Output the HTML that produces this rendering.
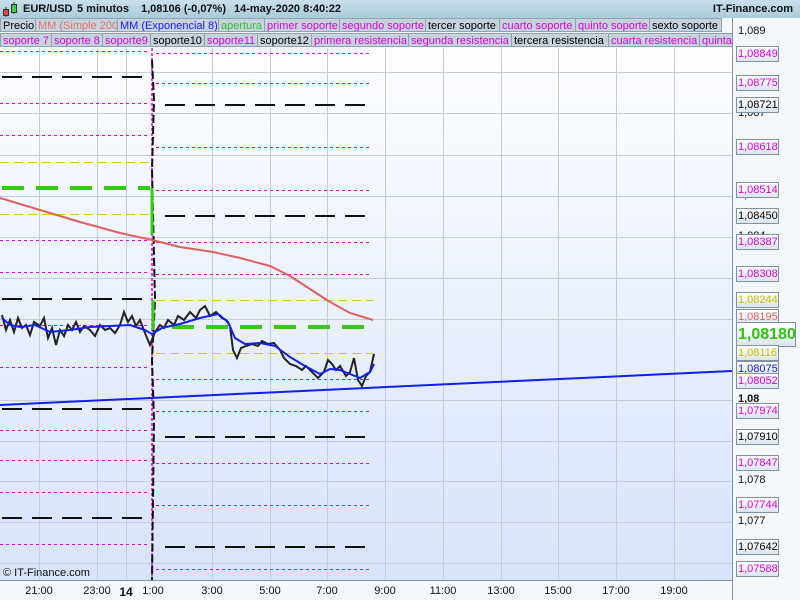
<!DOCTYPE html>
<html><head><meta charset="utf-8"><style>
body{margin:0;width:800px;height:600px;overflow:hidden;font-family:"Liberation Sans",sans-serif;background:#f4f7fa;position:relative}
.top{position:absolute;left:0;top:0;width:800px;height:18px;background:linear-gradient(#c9e0ea,#a9cbd9);font-size:11px;font-weight:bold;color:#111;white-space:nowrap}
.tab{position:absolute;height:14px;line-height:14px;font-size:11px;background:#c4d3dc;border:1px solid #8fa3b0;box-sizing:border-box;padding-left:2px;white-space:nowrap;overflow:hidden}
.m{color:#e000e0}
.lbl{position:absolute;left:736px;width:43px;height:16px;line-height:15px;font-size:11px;border:1px solid #7f93a2;box-sizing:border-box;background:linear-gradient(#fff,#dce5ef);padding-left:1px;white-space:nowrap;overflow:hidden}
.ax{position:absolute;left:738px;font-size:11px;color:#111}
.bx{position:absolute;top:585px;font-size:11px;color:#111;transform:translateX(-50%)}
</style></head><body>
<div class="top">
<svg style="position:absolute;left:2px;top:2px" width="16" height="15"><line x1="4" y1="5" x2="4" y2="15" stroke="#333"/><rect x="1.5" y="7.5" width="5" height="6" fill="#e44" stroke="#333"/><line x1="12" y1="0" x2="12" y2="12" stroke="#333"/><rect x="9.5" y="2.5" width="5" height="8" fill="#4c4" stroke="#333"/></svg>
<span style="position:absolute;left:23px;top:3px">EUR/USD</span>
<span style="position:absolute;left:77px;top:3px">5 minutos</span>
<span style="position:absolute;left:141px;top:3px">1,08106 (-0,07%)</span>
<span style="position:absolute;left:234px;top:3px">14-may-2020 8:40:22</span>
<span style="position:absolute;right:7px;top:3px">IT-Finance.com</span>
</div>
<div class="tab" style="left:0;top:18px;width:36px">Precio</div>
<div class="tab" style="left:35px;top:18px;width:83px;color:#e87070">MM (Simple 200)</div>
<div class="tab" style="left:117px;top:18px;width:102px;color:#1a1aff">MM (Exponencial 8)</div>
<div class="tab" style="left:218px;top:18px;width:47px;color:#33c433">apertura</div>
<div class="tab m" style="left:264px;top:18px;width:76px">primer soporte</div>
<div class="tab m" style="left:339px;top:18px;width:87px">segundo soporte</div>
<div class="tab" style="left:425px;top:18px;width:75px">tercer soporte</div>
<div class="tab m" style="left:499px;top:18px;width:77px">cuarto soporte</div>
<div class="tab m" style="left:575px;top:18px;width:75px">quinto soporte</div>
<div class="tab" style="left:649px;top:18px;width:73px">sexto soporte</div>
<div class="tab m" style="left:0;top:33px;width:52px">soporte 7</div>
<div class="tab m" style="left:51px;top:33px;width:52px">soporte 8</div>
<div class="tab m" style="left:102px;top:33px;width:49px">soporte9</div>
<div class="tab" style="left:150px;top:33px;width:55px">soporte10</div>
<div class="tab m" style="left:204px;top:33px;width:54px">soporte11</div>
<div class="tab" style="left:257px;top:33px;width:55px">soporte12</div>
<div class="tab m" style="left:311px;top:33px;width:98px">primera resistencia</div>
<div class="tab m" style="left:408px;top:33px;width:104px">segunda resistencia</div>
<div class="tab" style="left:511px;top:33px;width:98px">tercera resistencia</div>
<div class="tab m" style="left:608px;top:33px;width:92px">cuarta resistencia</div>
<div class="tab m" style="left:699px;top:33px;width:34px">quinta</div>

<svg style="position:absolute;left:0;top:48px" width="733" height="532">
<defs><linearGradient id="g" x1="0" y1="0" x2="0" y2="1"><stop offset="0" stop-color="#fdfeff"/><stop offset="1" stop-color="#d7e3fa"/></linearGradient></defs>
<rect width="733" height="532" fill="url(#g)"/>
<g stroke="#c5cdda" stroke-width="1">
<line x1="39.5" y1="0" x2="39.5" y2="532"/><line x1="97.5" y1="0" x2="97.5" y2="532"/><line x1="126.5" y1="0" x2="126.5" y2="532"/><line x1="212.5" y1="0" x2="212.5" y2="532"/><line x1="270.5" y1="0" x2="270.5" y2="532"/><line x1="327.5" y1="0" x2="327.5" y2="532"/><line x1="385.5" y1="0" x2="385.5" y2="532"/><line x1="443.5" y1="0" x2="443.5" y2="532"/><line x1="501.5" y1="0" x2="501.5" y2="532"/><line x1="558.5" y1="0" x2="558.5" y2="532"/><line x1="616.5" y1="0" x2="616.5" y2="532"/><line x1="674.5" y1="0" x2="674.5" y2="532"/>
<line x1="0" y1="24.5" x2="733" y2="24.5"/><line x1="0" y1="65.5" x2="733" y2="65.5"/><line x1="0" y1="107.5" x2="733" y2="107.5"/><line x1="0" y1="148.5" x2="733" y2="148.5"/><line x1="0" y1="189.5" x2="733" y2="189.5"/><line x1="0" y1="230.5" x2="733" y2="230.5"/><line x1="0" y1="271.5" x2="733" y2="271.5"/><line x1="0" y1="352.5" x2="733" y2="352.5"/><line x1="0" y1="393.5" x2="733" y2="393.5"/><line x1="0" y1="433.5" x2="733" y2="433.5"/><line x1="0" y1="474.5" x2="733" y2="474.5"/><line x1="0" y1="515.5" x2="733" y2="515.5"/>
</g>
<g transform="translate(0,-48)">
<g stroke="#e000e0" stroke-width="1" stroke-dasharray="3,3" fill="none">
<path d="M0 51.5H150M0 103.5H150M0 135.5H150M0 240.5H150M0 272.5H150M0 325.5H150M0 367.5H150M0 430.5H150M0 460.5H150M0 492.5H150M0 544.5H150"/>
<path d="M156 53.5H372M156 83.5H372M156 147.5H372M156 190.5H372M156 242.5H372M156 274.5H372M156 379.5H372M156 411.5H372M156 463.5H372M156 505.5H372M156 569.5H372"/>
</g>
<g stroke="#d4cc00" stroke-width="1" stroke-dasharray="9,5" fill="none"><path d="M0 162.5H150M0 214.5H150M156 300.5H374M156 353.5H374"/></g>
<g stroke="#111" stroke-width="2" stroke-dasharray="20,10" fill="none"><path d="M2 77H146M2 299H146M2 409H146M2 518H146M165 105H372M165 216H372M165 437H372M165 547H372"/></g>
<g stroke="#33cc11" stroke-width="4" stroke-dasharray="22,12" fill="none"><path d="M2 188H150M172 327H372"/></g>
<path d="M152 48V580" stroke="#e000e0" stroke-width="1.5" stroke-dasharray="3,2"/>
<path d="M152 60L154 100L152 170L155 300L152 360L154 420L152 580" stroke="#111" stroke-width="2" stroke-dasharray="8,3" fill="none"/>
<path d="M152 188V235M153 300V330" stroke="#33cc11" stroke-width="3"/>
<path d="M0 405L732 371" stroke="#1020ee" stroke-width="2"/>
<path d="M0 198L40 210L80 222L120 233L152 240L180 247L213 252L240 258L270 266L290 276L310 289L330 302L350 313L373 320" stroke="#e06060" stroke-width="2" fill="none"/>
<path d="M2 315L6 330L10 320L14 332L18 318L22 328L26 325L30 335L34 322L40 326L44 318L48 338L52 328L56 345L60 330L64 336L68 325L72 330L76 322L80 332L84 326L90 330L95 336L100 325L105 330L110 328L115 333L120 325L124 312L128 322L132 316L136 326L140 320L145 333L150 345L155 332L160 325L164 328L168 320L174 325L178 316L184 320L190 312L196 318L200 310L205 306L210 316L216 312L222 318L226 320L230 326L233 350L237 358L241 348L246 346L252 344L258 346L262 341L268 344L274 343L280 350L284 358L290 364L296 366L302 370L306 366L312 372L318 378L324 372L328 360L332 364L336 370L340 366L346 376L350 372L354 358L358 380L362 386L366 376L370 372L374 354" stroke="#222" stroke-width="2" fill="none"/>
<path d="M2 318L10 325L20 327L35 325L50 332L70 330L90 327L110 326L130 325L145 330L152 334L162 328L180 324L200 318L218 314L228 322L235 338L245 344L260 343L275 346L290 357L305 366L320 374L330 369L340 370L350 374L360 378L370 372L374 364" stroke="#1020ee" stroke-width="2" fill="none"/>
</g>
</svg>
<div style="position:absolute;left:732px;top:18px;width:1px;height:582px;background:#7f93a2"></div>
<div style="position:absolute;left:0;top:580px;width:733px;height:1px;background:#7f93a2"></div>
<div style="position:absolute;left:3px;top:567px;font-size:11px;color:#111">© IT-Finance.com</div>
<div class="ax" style="top:25px">1,089</div>
<div class="ax" style="top:107px">1,087</div>
<div class="ax" style="top:189px">1,085</div>
<div class="ax" style="top:230px">1,084</div>
<div class="ax" style="top:393px;font-weight:bold">1,08</div>
<div class="ax" style="top:474px">1,078</div>
<div class="ax" style="top:515px">1,077</div>
<div class="lbl m" style="top:46px">1,08849</div>
<div class="lbl m" style="top:75px">1,08775</div>
<div class="lbl" style="top:97px">1,08721</div>
<div class="lbl m" style="top:139px">1,08618</div>
<div class="lbl m" style="top:182px">1,08514</div>
<div class="lbl" style="top:208px">1,08450</div>
<div class="lbl m" style="top:234px">1,08387</div>
<div class="lbl m" style="top:266px">1,08308</div>
<div class="lbl" style="top:292px;color:#c8c000">1,08244</div>
<div class="lbl" style="top:309px;color:#e06060">1,08195</div>
<div class="lbl" style="top:322px;width:60px;height:25px;line-height:23px;font-size:16px;font-weight:bold;color:#33c011">1,08180</div>
<div class="lbl" style="top:345px;color:#c8c000">1,08116</div>
<div class="lbl" style="top:361px;color:#1020ee">1,08075</div>
<div class="lbl m" style="top:373px">1,08052</div>
<div class="lbl m" style="top:403px">1,07974</div>
<div class="lbl" style="top:429px">1,07910</div>
<div class="lbl m" style="top:455px">1,07847</div>
<div class="lbl m" style="top:497px">1,07744</div>
<div class="lbl" style="top:539px">1,07642</div>
<div class="lbl m" style="top:561px">1,07588</div>
<div class="bx" style="left:39px">21:00</div>
<div class="bx" style="left:97px">23:00</div>
<div class="bx" style="left:126px;font-weight:bold;font-size:12px">14</div>
<div class="bx" style="left:153px">1:00</div>
<div class="bx" style="left:212px">3:00</div>
<div class="bx" style="left:270px">5:00</div>
<div class="bx" style="left:327px">7:00</div>
<div class="bx" style="left:385px">9:00</div>
<div class="bx" style="left:443px">11:00</div>
<div class="bx" style="left:501px">13:00</div>
<div class="bx" style="left:558px">15:00</div>
<div class="bx" style="left:616px">17:00</div>
<div class="bx" style="left:674px">19:00</div>
</body></html>
